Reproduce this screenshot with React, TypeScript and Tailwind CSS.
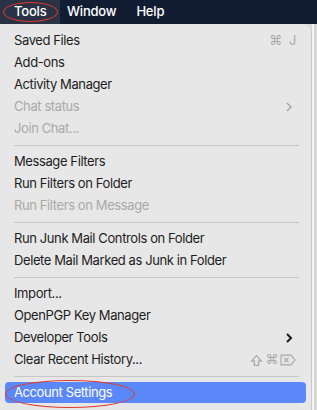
import React from "react"

type Item = { label: string; disabled?: boolean; shortcut?: React.ReactNode; sub?: "gray" | "dark" }

const groups: Item[][] = [
  [
    { label: "Saved Files", shortcut: <span className="flex gap-[7px]"><span>⌘</span><span>J</span></span> },
    { label: "Add-ons" },
    { label: "Activity Manager" },
    { label: "Chat status", disabled: true, sub: "gray" },
    { label: "Join Chat...", disabled: true },
  ],
  [
    { label: "Message Filters" },
    { label: "Run Filters on Folder" },
    { label: "Run Filters on Message", disabled: true },
  ],
  [
    { label: "Run Junk Mail Controls on Folder" },
    { label: "Delete Mail Marked as Junk in Folder" },
  ],
  [
    { label: "Import..." },
    { label: "OpenPGP Key Manager" },
    { label: "Developer Tools", sub: "dark" },
    { label: "Clear Recent History...", shortcut: <ShiftCmdDel /> },
  ],
]

function ShiftCmdDel() {
  return (
    <span className="flex items-center gap-[2px] text-[#a9a9a9]">
      <svg width="13" height="13" viewBox="0 0 12 12" fill="none" stroke="currentColor" strokeWidth="1.1">
        <path d="M6 1.5 L10.5 6.3 H8 V10.5 H4 V6.3 H1.5 Z" />
      </svg>
      <span className="text-[13px]">⌘</span>
      <svg width="16" height="12" viewBox="0 0 15 11" fill="none" stroke="currentColor" strokeWidth="1.1">
        <path d="M1 1 H10.5 L14 5.5 L10.5 10 H1 Z" />
        <path d="M4 3.3 L8 7.7 M8 3.3 L4 7.7" />
      </svg>
    </span>
  )
}

function Chevron({ dark }: { dark?: boolean }) {
  return (
    <svg width="8" height="12" viewBox="0 0 8 12" fill="none" stroke={dark ? "#1a1a1a" : "#a5a5a5"} strokeWidth={dark ? 2 : 1.4}>
      <path d="M2 2 L6 6 L2 10" />
    </svg>
  )
}

function Row({ item }: { item: Item }) {
  return (
    <div className={`h-[22px] flex items-center justify-between pl-[14px] ${item.sub ? "pr-[18px]" : "pr-[15px]"} ${item.disabled ? "text-[#a9a9a9]" : "text-[#1d1d1d]"}`}>
      <span>{item.label}</span>
      {item.shortcut && <span className="text-[#a9a9a9] text-[13px]">{item.shortcut}</span>}
      {item.sub && <Chevron dark={item.sub === "dark"} />}
    </div>
  )
}

export default function App() {
  return (
    <div className="w-[317px] h-[410px] overflow-hidden bg-[#121d33] flex flex-col" style={{ fontFamily: "Inter, 'Liberation Sans', sans-serif" }}>
      <div className="h-[24px] flex items-center text-white text-[13px] font-medium tracking-[-0.2px] shrink-0">
        <div className="relative h-full w-[60px] bg-[#2a3346] flex items-center pl-[14px]">
          Tools
          <div className="absolute left-[3px] top-[2px] w-[55px] h-[20px] rounded-[50%] border-[1.5px] border-[#e0392b]" />
        </div>
        <span className="ml-[7px]">Window</span>
        <span className="ml-[20px]">Help</span>
      </div>
      <div className="flex flex-1 bg-[#dcdcdc]">
        <div className="relative w-[312px] bg-[#e7e7e7] rounded-tr-[8px] border-r border-[#c9c9c9] text-[13px] tracking-[-0.4px] pt-[6px] pb-[7px] flex flex-col">
          {groups.map((g, i) => (
            <div key={i}>
              {g.map((it) => (
                <Row key={it.label} item={it} />
              ))}
              <div className="h-[11px] flex items-center pl-[14px] pr-[12px]">
                <div className="h-px w-full bg-[#c6c6c6]" />
              </div>
            </div>
          ))}
          <div className="relative mx-[5px] h-[21px] rounded-[4px] bg-[#5b88f8] text-white flex items-center pl-[9px]">
            Account Settings
            <div className="absolute left-0 top-[-2px] w-[130px] h-[28px] rounded-[50%] border-[1.5px] border-[#e0392b]" />
          </div>
        </div>
        <div className="flex-1 flex">
          <div className="w-[2px] bg-[#f4f4f4]" />
          <div className="flex-1 bg-[#d6d6d6]" />
        </div>
      </div>
    </div>
  )
}
